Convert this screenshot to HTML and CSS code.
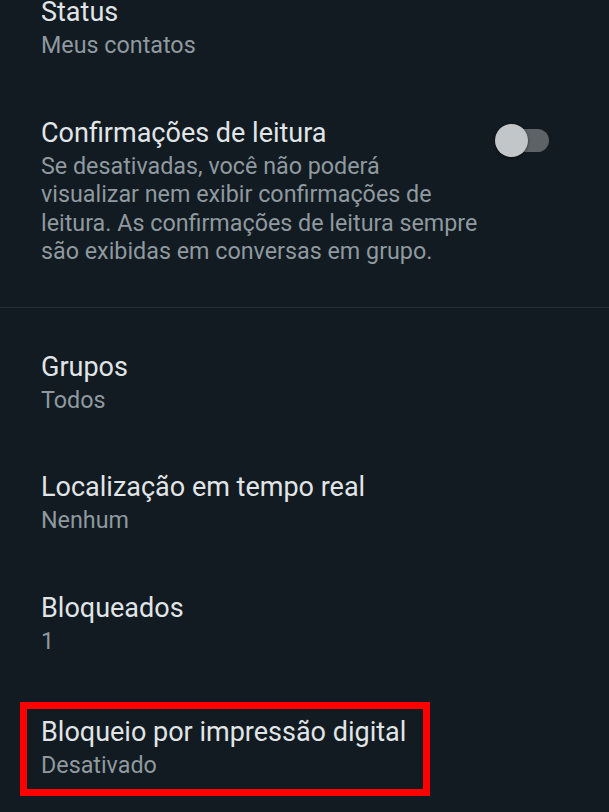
FILE: index.html
```html
<!DOCTYPE html>
<html lang="pt-BR">
<head>
  <meta charset="UTF-8" />
  <meta name="viewport" content="width=device-width, initial-scale=1.0"/>
  <title>Privacidade</title>
  <link rel="stylesheet" href="styles.css">
</head>
<body>
  <div class="settings">
    <div class="section">
      <div class="item">
        <div class="title">Status</div>
        <div class="sub">Meus contatos</div>
      </div>
      <div class="item item-toggle">
        <div class="text">
          <div class="title">Confirmações de leitura</div>
          <div class="sub">Se desativadas, você não poderá<br>visualizar nem exibir confirmações de<br>leitura. As confirmações de leitura sempre<br>são exibidas em conversas em grupo.</div>
        </div>
        <div class="switch"><span class="thumb"></span></div>
      </div>
    </div>

    <div class="section">
      <div class="item">
        <div class="title">Grupos</div>
        <div class="sub">Todos</div>
      </div>
      <div class="item">
        <div class="title">Localização em tempo real</div>
        <div class="sub">Nenhum</div>
      </div>
      <div class="item">
        <div class="title">Bloqueados</div>
        <div class="sub">1</div>
      </div>
      <div class="item item-marked">
        <div class="marked">
          <div class="title">Bloqueio por impressão digital</div>
          <div class="sub">Desativado</div>
        </div>
      </div>
    </div>
  </div>
</body>
</html>
```

FILE: styles.css
```css
body {
  margin: 0;
  background: #111b21;
  font-family: Roboto, "Noto Sans", sans-serif;
  overflow: hidden;
}

.settings {
  margin-top: -34px;
}

.section {
  padding: 13px 0 14px;
  border-bottom: 1px solid #222e35;
}

.section:first-child {
  padding-top: 0;
}

.section:last-child {
  border-bottom: none;
}

.item {
  padding: 27px 41px;
}

.title {
  font-size: 27px;
  line-height: 38px;
  color: #e1e5e7;
}

.sub {
  font-size: 23.3px;
  line-height: 28.5px;
  color: #8f999f;
}

.item-toggle {
  display: flex;
  justify-content: space-between;
  align-items: flex-start;
  padding-right: 60px;
}

.item-toggle .text {
  white-space: nowrap;
}

.switch {
  position: relative;
  width: 46px;
  height: 23px;
  margin-top: 15px;
  border-radius: 12px;
  background: #5c6266;
}

.thumb {
  position: absolute;
  left: -8px;
  top: -5px;
  width: 33px;
  height: 33px;
  border-radius: 50%;
  background: #c3c6c8;
  box-shadow: 0 1px 3px rgba(0, 0, 0, 0.5);
}

.item-marked {
  padding: 20px 0 14px 20px;
}

.marked {
  width: fit-content;
  padding: 4px 17px 9px 14px;
  border: 7px solid #ff0000;
}
```
